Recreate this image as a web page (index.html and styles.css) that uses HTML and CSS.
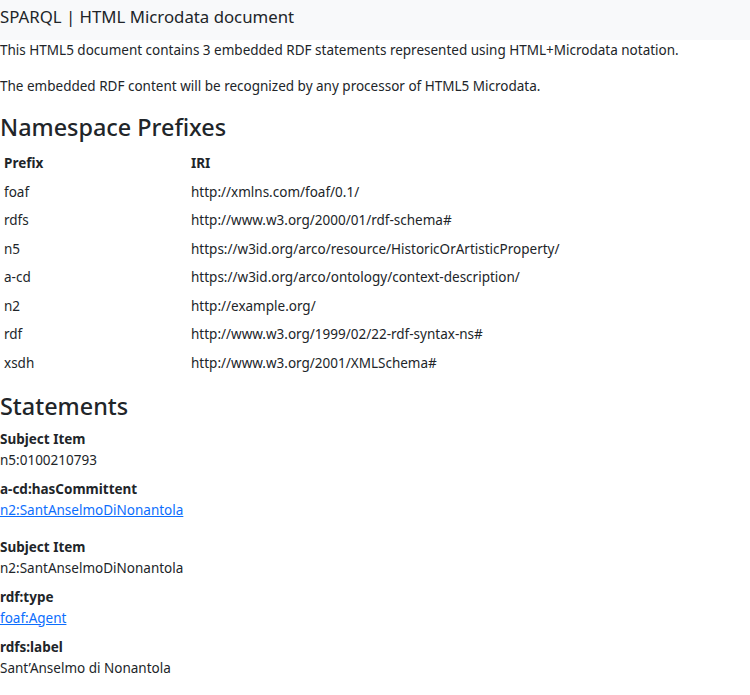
FILE: index.html
```html
<!DOCTYPE html>
<html lang="en">
<head>
<meta charset="utf-8">
<title>SPARQL | HTML Microdata document</title>
<link rel="stylesheet" href="styles.css">
</head>
<body>
<header class="topbar">
  <span class="brand">SPARQL | HTML Microdata document</span>
</header>
<main class="content">
  <p class="lead-text">This HTML5 document contains 3 embedded RDF statements represented using HTML+Microdata notation.</p>
  <p class="lead-text">The embedded RDF content will be recognized by any processor of HTML5 Microdata.</p>

  <h2 class="section-title">Namespace Prefixes</h2>
  <table class="ns-table">
    <thead>
      <tr><th class="col-prefix">Prefix</th><th>IRI</th></tr>
    </thead>
    <tbody>
      <tr><td>foaf</td><td>http://xmlns.com/foaf/0.1/</td></tr>
      <tr><td>rdfs</td><td>http://www.w3.org/2000/01/rdf-schema#</td></tr>
      <tr><td>n5</td><td>https://w3id.org/arco/resource/HistoricOrArtisticProperty/</td></tr>
      <tr><td>a-cd</td><td>https://w3id.org/arco/ontology/context-description/</td></tr>
      <tr><td>n2</td><td>http://example.org/</td></tr>
      <tr><td>rdf</td><td>http://www.w3.org/1999/02/22-rdf-syntax-ns#</td></tr>
      <tr><td>xsdh</td><td>http://www.w3.org/2001/XMLSchema#</td></tr>
    </tbody>
  </table>

  <h2 class="section-title">Statements</h2>
  <div class="stmt">
    <dl class="stmt-list">
      <dt>Subject Item</dt>
      <dd>n5:0100210793</dd>
      <dt>a-cd:hasCommittent</dt>
      <dd><a href="#">n2:SantAnselmoDiNonantola</a></dd>
    </dl>
  </div>
  <div class="stmt">
    <dl class="stmt-list">
      <dt>Subject Item</dt>
      <dd>n2:SantAnselmoDiNonantola</dd>
      <dt>rdf:type</dt>
      <dd><a href="#">foaf:Agent</a></dd>
      <dt>rdfs:label</dt>
      <dd>Sant’Anselmo di Nonantola</dd>
    </dl>
  </div>
</main>
</body>
</html>
```
FILE: styles.css
```css
html, body {
  margin: 0;
  padding: 0;
  background: #fff;
}
body {
  font-family: "Noto Sans", "Open Sans", sans-serif;
  font-size: 13.5px;
  line-height: 21.6px;
  color: #212529;
}
.topbar {
  background: #f8f9fa;
  height: 40px;
  box-sizing: border-box;
  padding: 2.5px 0 0 0;
}
.brand {
  font-size: 16.8px;
  line-height: 27px;
}
.content {
  padding: 0;
}
.lead-text {
  margin: 0 0 14.4px 0;
}
.section-title {
  font-size: 23.4px;
  font-weight: 500;
  line-height: 30px;
  margin: 0 0 8px 0;
}
.ns-table {
  border-collapse: collapse;
  width: 100%;
  margin-bottom: 13px;
}
.ns-table th,
.ns-table td {
  text-align: left;
  padding: 3.5px 4px;
  line-height: 21.5px;
  vertical-align: top;
}
.ns-table th {
  font-weight: 700;
}
.col-prefix {
  width: 179px;
}
.stmt {
  margin-bottom: 15px;
}
.stmt-list {
  margin: 0;
}
.stmt-list dt {
  font-weight: 700;
  line-height: 21px;
}
.stmt-list dd {
  margin: 0 0 7.8px 0;
  line-height: 21.4px;
}
.stmt-list a {
  color: #0d6efd;
  text-decoration: underline;
}
```
